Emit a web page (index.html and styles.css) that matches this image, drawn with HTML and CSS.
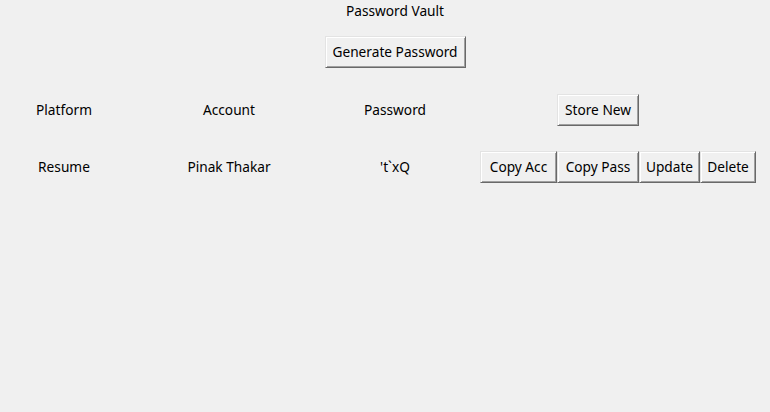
FILE: index.html
```html
<!DOCTYPE html>
<html>
<head>
<meta charset="utf-8">
<link rel="stylesheet" href="styles.css">
<title>Password Vault</title>
</head>
<body>
<div class="vault">
  <div class="cell c2 title txt">Password Vault</div>

  <div class="cell c2 gen"><button class="btn w-gen">Generate Password</button></div>

  <div class="cell c0 row-h txt">Platform</div>
  <div class="cell c1 row-h txt">Account</div>
  <div class="cell c2 row-h txt">Password</div>
  <div class="cell c4 row-h fill"><button class="btn">Store New</button></div>

  <div class="cell c0 row-d txt">Resume</div>
  <div class="cell c1 row-d txt">Pinak Thakar</div>
  <div class="cell c2 row-d txt">'t`xQ</div>
  <div class="cell c3 row-d end"><button class="btn w-acc">Copy Acc</button></div>
  <div class="cell c4 row-d fill"><button class="btn">Copy Pass</button></div>
  <div class="cell c5 row-d fill"><button class="btn">Update</button></div>
  <div class="cell c6 row-d fill"><button class="btn">Delete</button></div>
</div>
</body>
</html>
```
FILE: styles.css
```css
html, body {
  margin: 0;
  padding: 0;
  background: #f0f0f0;
}
body {
  width: 770px;
  height: 412px;
  font-family: "Noto Sans", "Open Sans", sans-serif;
  font-size: 13.7px;
  color: #000;
}
.vault {
  display: grid;
  grid-template-columns: 128px 202px 130px 97px 82px 61px 56px;
  grid-template-rows: 22px 60px 56px 58px;
  align-items: center;
}
.cell {
  justify-self: center;
  white-space: nowrap;
}
.cell.txt { padding-bottom: 2px; }
.cell.end { justify-self: end; }
.cell.fill { justify-self: stretch; }
.title { grid-row: 1; }
.gen { grid-row: 2; }
.row-h { grid-row: 3; }
.row-d { grid-row: 4; }
.c0 { grid-column: 1; }
.c1 { grid-column: 2; }
.c2 { grid-column: 3; }
.c3 { grid-column: 4; }
.c4 { grid-column: 5; }
.c5 { grid-column: 6; }
.c6 { grid-column: 7; }
.cell .btn { display: block; width: 100%; }
.cell .btn.w-gen { width: 141px; }
.cell .btn.w-acc { width: 77px; }
.btn {
  font: inherit;
  color: #000;
  background: #f0f0f0;
  height: 32px;
  padding: 0 0 1px;
  margin: 0;
  border-style: solid;
  border-width: 1px;
  border-color: #e3e3e3 #696969 #696969 #e3e3e3;
  box-shadow: inset 1px 1px #ffffff, inset -1px -1px #a0a0a0;
  border-radius: 0;
}
```
